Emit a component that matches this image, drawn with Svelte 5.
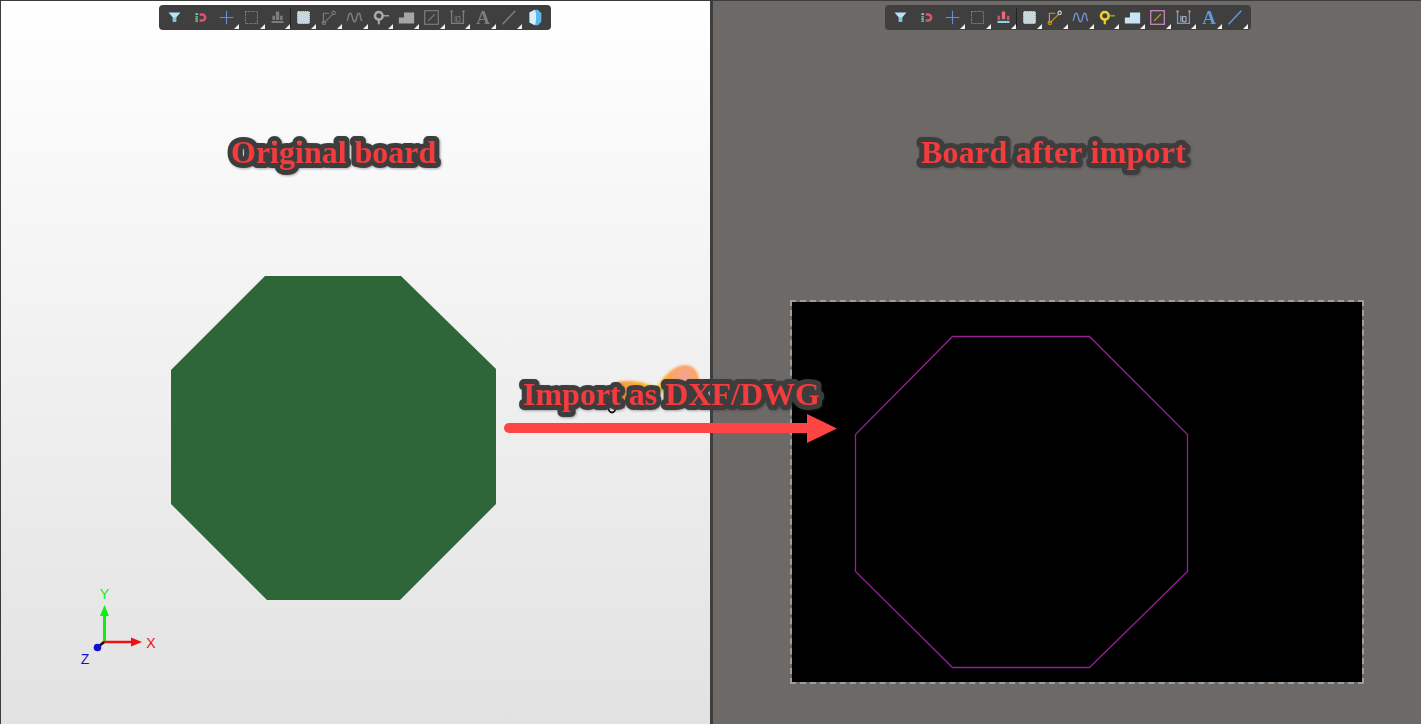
<script>
  const dim = '#7d7d7d';
  const icons = {
    filter: () => `<path d="M3 4h14l-5 6v5H8v-5z" fill="#b5e3f2"/><path d="M8 10h4v5H8z" fill="#7fc4dc"/>`,
    magnet: () => `<path d="M9 5h3a5 5 0 0 1 0 10H9v-3h3a2 2 0 0 0 0-4H9z" fill="#e0526a"/><path d="M4 5h3v2H4z" fill="#7fd0e0"/><path d="M4 8.500h3v1.500H4zM4 11h3v1.500H4z" fill="#8fc98f"/><path d="M4 13.500h3V15H4z" fill="#7fd0e0"/>`,
    plus: () => `<path d="M10 2v16M2 10h16" stroke="#5f8fd8" stroke-width="1.300"/>`,
    rect: () => `<rect x="3" y="3" width="14" height="14" fill="none" stroke="#5b80d0" stroke-width="1.300" stroke-dasharray="2 1"/>`,
    stats: (on) => on
      ? `<path d="M8 3h4v9H8z" fill="#ee6a78"/><path d="M3 8h3v5H3zM14 8h3v5h-3z" fill="#ee6a78" opacity=".7"/><path d="M3 14h14v2.500H3z" fill="#8fd0ea"/>`
      : `<path d="M8 3h4v10H8zM4 8h3v5H4zM13 8h3v5h-3zM3 14h14v2.500H3z" fill="${dim}"/>`,
    chip: () => `<rect x="3" y="3" width="14" height="14" rx="1" fill="#c9d6de" stroke="#e8f0f4" stroke-dasharray="1.500 1"/>`,
    route: (on) => { const c = on ? '#d39a22' : dim; return `<path d="M4 17V5h7M5 16L15 6" fill="none" stroke="${c}" stroke-width="1.300"/><circle cx="4.500" cy="16.500" r="2" fill="none" stroke="${c}" stroke-width="1.200"/><circle cx="16" cy="4.500" r="2" fill="none" stroke="${on ? '#ddd' : c}" stroke-width="1.200"/>`; },
    wave: (on) => { const c = on ? '#6f8fc8' : dim; return `<path d="M1 14c2-1 1-9 4-9s2 10 5 10 2-10 5-10 1 8 4 9" fill="none" stroke="${c}" stroke-width="1.700"/>`; },
    pin: (on) => on
      ? `<circle cx="8" cy="8" r="4.500" fill="none" stroke="#f0d030" stroke-width="3"/><path d="M8 12v6" stroke="#f0d030" stroke-width="2.600"/><path d="M13 8h7" stroke="#70c040" stroke-width="1.600"/>`
      : `<circle cx="8" cy="8" r="4.500" fill="none" stroke="#aaa" stroke-width="3"/><path d="M8 12v6" stroke="#aaa" stroke-width="2.400"/><path d="M13 8h7" stroke="#aaa" stroke-width="1.600"/>`,
    stair: (on) => `<path d="M1 17V10h6V4h12v13z" fill="${on ? '#c8e4f4' : '#a5a5a5'}"/>`,
    box: (on) => on
      ? `<rect x="2" y="2" width="16" height="16" fill="none" stroke="#c78ab8" stroke-width="1.500"/><path d="M6 14l8-8" stroke="#d89a3a" stroke-width="1.400"/>`
      : `<rect x="2" y="2" width="16" height="16" fill="none" stroke="${dim}" stroke-width="1.400"/><path d="M6 14l8-8" stroke="${dim}" stroke-width="1.400"/>`,
    dim: (on) => { const c = on ? '#6f9ad8' : dim; return `<path d="M3 4v13h14V4" fill="none" stroke="${c}" stroke-width="1.500"/><path d="M7 15V8M9 15V9h4v6z" fill="none" stroke="${on ? '#cfd8e4' : c}"/><circle cx="3" cy="3" r="1.500" fill="${on ? '#d39a22' : c}"/><circle cx="17" cy="3" r="1.500" fill="${on ? '#d39a22' : c}"/>`; },
    line: (on) => `<path d="M3 18L18 2" stroke="${on ? '#5b9ade' : dim}" stroke-width="1.800"/>`,
    sphere: () => `<path d="M10 1h4l4 4v10l-4 4h-4z" fill="#5db8ee"/><path d="M10 1L4 4v12l6 3c2.500-2 2.500-16 0-18z" fill="#d8f0fc"/>`
  };
  const left = ['filter','magnet','plus','rect','stats','chip','route','wave','pin','stair','box','dim','text','line','sphere']
    .map((n) => ({ n, on: false }));
  const right = ['filter','magnet','plus','rect','stats','chip','route','wave','pin','stair','box','dim','text','line']
    .map((n) => ({ n, on: true }));
  const noCorner = ['filter', 'magnet', 'sphere'];
</script>

{#snippet toolbar(items)}
  <div class="toolbar">
    {#each items as it, i}
      <div class="slot" class:sep={i === 4}>
        {#if it.n === 'text'}
          <span class="glyph" class:on={it.on}>A</span>
        {:else}
          <svg viewBox="0 0 20 20" width="17" height="17">{@html icons[it.n](it.on)}</svg>
        {/if}
        {#if !noCorner.includes(it.n)}<i class="corner"></i>{/if}
      </div>
    {/each}
  </div>
{/snippet}

<div class="page">
  <section class="pane left">
    {@render toolbar(left)}
    <svg class="canvas" viewBox="0 0 710 724" width="710" height="724">
      <polygon points="265,276 401,276 496,369 496,504 400,600 267,600 171,504 171,370" fill="#2e6637"/>
      <path d="M104.500 642V615" stroke="#10ee10" stroke-width="3"/>
      <path d="M104.500 605l-4.500 11h9z" fill="#10ee10"/>
      <path d="M104 642H133" stroke="#f01010" stroke-width="2.500"/>
      <path d="M142 642l-11-4.500v9z" fill="#f01010"/>
      <path d="M98 647l6-5" stroke="#111" stroke-width="2.500"/>
      <circle cx="97.500" cy="647.500" r="3.800" fill="#1010d0"/>
      <text class="axis" x="104.500" y="599" fill="#10ee10">Y</text>
      <text class="axis" x="151" y="647.500" fill="#f01010">X</text>
      <text class="axis" x="85" y="664" fill="#1010d0">Z</text>
    </svg>
  </section>
  <section class="pane right">
    {@render toolbar(right)}
    <div class="sheet">
      <svg viewBox="0 0 570 380" width="570" height="380">
        <polygon points="160.500,34.500 297.500,34.500 395.500,132.500 395.500,269.500 297.500,365.500 160.500,365.500 63.500,269.500 63.500,132.500" fill="none" stroke="#951f95" stroke-width="1.300"/>
      </svg>
    </div>
  </section>

  <svg class="overlay" viewBox="0 0 1421 724" width="1421" height="724">
    <defs>
      <radialGradient id="glow" gradientUnits="userSpaceOnUse" cx="684" cy="376" r="70">
        <stop offset="0" stop-color="#f7a0a0"/>
        <stop offset=".22" stop-color="#fba94c"/>
        <stop offset=".42" stop-color="#fbe030"/>
        <stop offset=".6" stop-color="#fbb038"/>
        <stop offset="1" stop-color="#f79a40"/>
      </radialGradient>
      <filter id="soft" x="-20%" y="-20%" width="140%" height="140%"><feGaussianBlur stdDeviation="1"/></filter>
      <filter id="drop" x="-5%" y="-200%" width="110%" height="500%"><feGaussianBlur stdDeviation="2"/></filter>
      <filter id="lift" x="-5%" y="-30%" width="110%" height="170%"><feDropShadow dx="1" dy="1" stdDeviation=".8" flood-color="#333" flood-opacity=".4"/></filter>
    </defs>
    <path d="M616 383c8-4 24-3 40 4 6-8 16-21 28-22 10-1 15 8 15 15s-5 12-15 12h-44c-6 8-12 14-20 11-6-3-8-16-4-20z" fill="url(#glow)" filter="url(#soft)"/>
    <path d="M507 432H806" stroke="#000" stroke-opacity=".6" stroke-width="9" stroke-linecap="round" filter="url(#drop)"/>
    <path d="M509 428H808" stroke="#ff4444" stroke-width="10" stroke-linecap="round"/>
    <path d="M807 414l30 14.500-30 14.500z" fill="#ff4444"/>
    <path d="M601 386l0 11 3-2 3 5 2-1-3-5 3-1z" fill="#111"/>
    <ellipse cx="612" cy="408" rx="3.500" ry="4.500" fill="none" stroke="#111" stroke-width="1.800"/>
    <text class="label" x="231" y="162.500" filter="url(#lift)">Original board</text>
    <text class="label" x="921" y="162.500" letter-spacing=".25" filter="url(#lift)">Board after import</text>
    <text class="label" x="523" y="405" filter="url(#lift)">Import as DXF/DWG</text>
  </svg>
</div>

<style>
  :global(body) { margin: 0; overflow: hidden; }
  .page { position: relative; display: flex; width: 1421px; height: 724px; overflow: hidden; }
  .pane { position: relative; height: 724px; box-sizing: border-box; border-top: 1px solid #3c3c3c; }
  .left { width: 710px; flex: none; border-left: 1px solid #3c3c3c; background: linear-gradient(#fff 0, #f8f8f8 170px, #efefef 400px, #e2e2e2 724px); }
  .right { flex: 1; border-left: 3px solid #3e3e3e; background: #6d6967; }
  .toolbar {
    position: absolute; top: 4px; display: flex; box-sizing: border-box; height: 25px; padding: 0 3px;
    background: #3f3f3f; border-radius: 4px; filter: blur(.4px); z-index: 2;
  }
  .left .toolbar { left: 158px; width: 392px; }
  .right .toolbar { left: 172px; width: 366px; }
  .slot { position: relative; width: 25.700px; flex: none; display: flex; align-items: center; justify-content: center; }
  .slot.sep::after { content: ''; position: absolute; right: -1px; top: 3px; bottom: 3px; width: 1px; background: #222; }
  .corner { position: absolute; right: 0; bottom: 1px; width: 0; height: 0; border-left: 5px solid transparent; border-bottom: 5px solid #f2f2f2; }
  .glyph { font: 700 19px "Liberation Serif", serif; color: #7d7d7d; line-height: 1; }
  .glyph.on { color: #5b9ade; }
  .canvas { position: absolute; left: -1px; top: -1px; }
  .axis { font: 14px "Liberation Sans", sans-serif; text-anchor: middle; }
  .sheet {
    position: absolute; left: 79px; top: 301px; width: 570px; height: 380px;
    background: #000; outline: 2px dashed #a09e9c;
  }
  .sheet svg { display: block; }
  .overlay { position: absolute; left: 0; top: 0; pointer-events: none; }
  .label {
    font: 700 32px "Liberation Serif", serif;
    fill: #f43a3c; stroke: #3e3e3e; stroke-width: 10px; stroke-linejoin: round; paint-order: stroke fill;
  }
</style>
